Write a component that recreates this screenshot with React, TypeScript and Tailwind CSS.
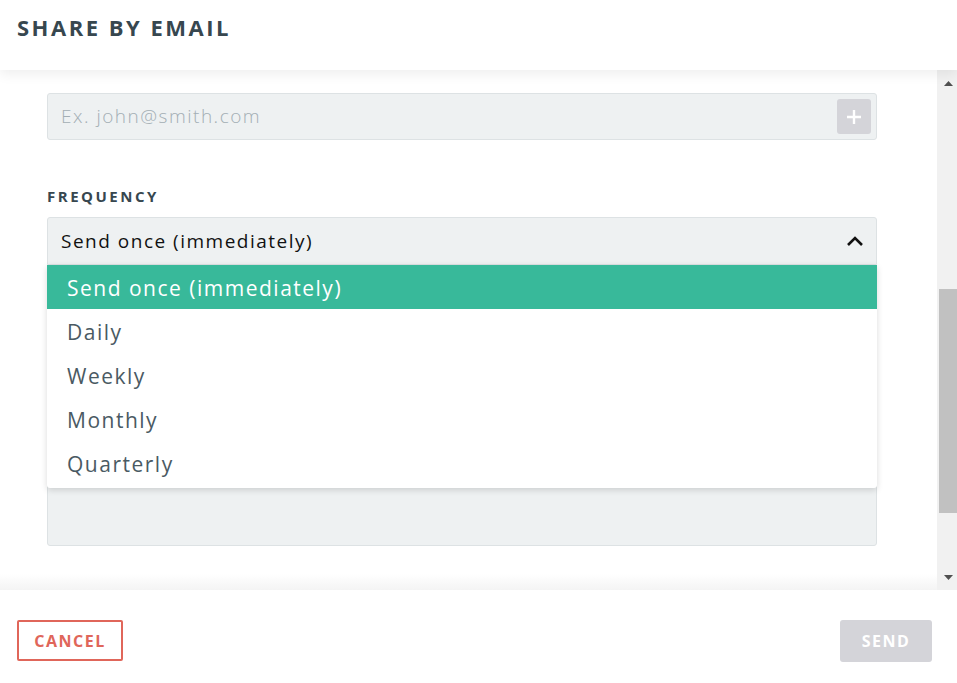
import React from 'react';

const options = ['Send once (immediately)', 'Daily', 'Weekly', 'Monthly', 'Quarterly'];

const font = { fontFamily: '"Open Sans", "Liberation Sans", sans-serif' };

const Scrollbar: React.FC = () => (
  <div className="w-[20px] bg-[#f1f1f1] flex flex-col">
    <div className="h-[26px] flex items-center justify-center pl-[2px]">
      <svg width="9" height="5" viewBox="0 0 9 5">
        <path d="M0 5 L4.5 0 L9 5 Z" fill="#505050" />
      </svg>
    </div>
    <div className="h-[193px]" />
    <div className="h-[224px] ml-[2px] bg-[#c1c1c1]" />
    <div className="flex-1" />
    <div className="h-[26px] flex items-center justify-center pl-[2px]">
      <svg width="9" height="5" viewBox="0 0 9 5">
        <path d="M0 0 L9 0 L4.5 5 Z" fill="#505050" />
      </svg>
    </div>
  </div>
);

const App: React.FC = () => {
  return (
    <div className="h-[683px] w-[957px] flex flex-col bg-white overflow-hidden" style={font}>
      <header className="relative z-20 h-[70px] bg-white shadow-[0_4px_12px_rgba(0,0,0,0.07)] flex items-center px-[17px]">
        <h1 className="text-[22px] font-bold tracking-[2.5px] text-[#37474f] leading-none -mt-[17px]">SHARE BY EMAIL</h1>
      </header>

      <div className="flex-1 flex min-h-0">
        <div className="relative flex-1 overflow-hidden">
          <div className="pl-[47px] pr-[60px] -mt-[14px]">
            <label className="block text-[15px] font-bold tracking-[2.5px] text-[#37474f] leading-[16px]">TO</label>
            <div className="mt-[21px] h-[47px] rounded-[3px] border border-[#dde2e4] bg-[#eef1f2] flex items-center pl-[13px] pr-[5px]">
              <span className="flex-1 text-[19px] font-light tracking-[1.5px] text-[#a3aeb4]">Ex. john@smith.com</span>
              <button className="w-[34px] h-[35px] rounded-[3px] bg-[#d4d4d9] flex items-center justify-center">
                <svg width="16" height="16" viewBox="0 0 16 16">
                  <path d="M8 1 V15 M1 8 H15" stroke="#ffffff" strokeWidth="2.4" />
                </svg>
              </button>
            </div>

            <label className="block mt-[48px] text-[15px] font-bold tracking-[2.5px] text-[#37474f] leading-[16px]">FREQUENCY</label>
            <div className="relative mt-[13px]">
              <div className="h-[48px] rounded-t-[3px] border border-[#dde2e4] bg-[#eef1f2] flex items-center pl-[13px] pr-[12px]">
                <span className="flex-1 text-[19px] tracking-[1.5px] text-[#111]">Send once (immediately)</span>
                <svg width="18" height="12" viewBox="0 0 18 12">
                  <path d="M2 10 L9 3 L16 10" stroke="#111" strokeWidth="2.6" fill="none" />
                </svg>
              </div>
              <ul className="absolute z-10 left-0 right-0 top-[48px] bg-white rounded-b-[3px] shadow-[0_2px_6px_rgba(0,0,0,0.15)] pb-[3px]">
                {options.map((o, i) => (
                  <li
                    key={o}
                    className={`h-[44px] flex items-center pl-[20px] pt-[3px] text-[21px] tracking-[1.5px] ${
                      i === 0 ? 'bg-[#38b99a] text-white' : 'text-[#4a5a63]'
                    }`}
                  >
                    {o}
                  </li>
                ))}
              </ul>
            </div>

            <label className="block mt-[30px] text-[15px] font-bold tracking-[2.5px] text-[#37474f] leading-[16px]">MESSAGE</label>
            <div className="mt-[13px] h-[222px] rounded-[3px] border border-[#dde2e4] bg-[#eef1f2]" />
          </div>
          <div className="absolute left-0 right-0 bottom-0 h-[16px] bg-gradient-to-b from-white/0 to-[#f4f4f4]" />
        </div>
        <Scrollbar />
      </div>

      <footer className="h-[93px] bg-white flex justify-between items-start pt-[30px] pl-[17px] pr-[25px]">
        <button className="h-[41px] w-[106px] border-2 border-[#e0665a] rounded-[2px] text-[16px] font-bold tracking-[1.5px] text-[#e0665a]">
          CANCEL
        </button>
        <button className="h-[42px] w-[92px] bg-[#d4d4d9] rounded-[3px] text-[16px] font-bold tracking-[1.5px] text-white">
          SEND
        </button>
      </footer>
    </div>
  );
};

export default App;
